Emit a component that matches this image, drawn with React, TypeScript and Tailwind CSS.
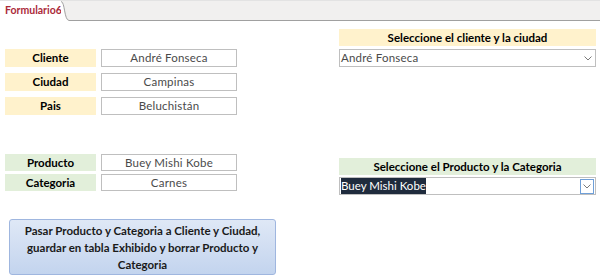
const font = { fontFamily: '"Lato", "Open Sans", sans-serif' };

function Label({ text, tone, h }: { text: string; tone: 'yellow' | 'green'; h: string }) {
  return (
    <div
      className={`w-[91px] ${h} flex items-center justify-center text-[11.5px] font-bold text-black ${
        tone === 'yellow' ? 'bg-[#fff2cc]' : 'bg-[#e2efda]'
      }`}
    >
      {text}
    </div>
  );
}

function Field({ value, h }: { value: string; h: string }) {
  return (
    <div className={`w-[136px] ${h} flex items-center justify-center border border-[#bfbfbf] bg-white text-[11.5px] tracking-[0.2px] text-[#4a4a4a]`}>
      {value}
    </div>
  );
}

function Chevron() {
  return (
    <svg width="8" height="5" viewBox="0 0 8 5" fill="none">
      <path d="M0.5 0.5 L4 4 L7.5 0.5" stroke="#7a7a7a" strokeWidth="1" />
    </svg>
  );
}

export default function App() {
  return (
    <div className="w-[600px] h-[276px] bg-white overflow-hidden" style={font}>
      {/* tab strip */}
      <div className="flex h-[21px] bg-[#f1f0ef] border-t border-[#e3e3e3]">
        <div className="w-[61px] h-[20px] bg-white flex items-center pl-[5px] text-[10.5px] font-bold text-[#ab2a3a]">
          Formulario6
        </div>
        <svg width="8" height="20" viewBox="0 0 8 20">
          <path d="M0 0 C4 0 3 19 8 19.5 L8 20 L0 20 Z" fill="white" />
          <path d="M0 0.5 C4 0.5 3 19 8 19.5" stroke="#a0a0a0" fill="none" />
        </svg>
        <div className="flex-1 border-b border-[#a0a0a0]" />
      </div>

      <div className="flex">
        {/* left column */}
        <div className="ml-[5px] w-[271px] flex flex-col">
          <div className="mt-[28px] flex flex-col gap-[6px]">
            <div className="flex gap-[5px]">
              <Label text="Cliente" tone="yellow" h="h-[18px]" />
              <Field value="André Fonseca" h="h-[18px]" />
            </div>
            <div className="flex gap-[5px]">
              <Label text="Ciudad" tone="yellow" h="h-[18px]" />
              <Field value="Campinas" h="h-[18px]" />
            </div>
            <div className="flex gap-[5px]">
              <Label text="Pais" tone="yellow" h="h-[18px]" />
              <Field value="Beluchistán" h="h-[18px]" />
            </div>
          </div>

          <div className="mt-[39px] flex flex-col gap-[3px]">
            <div className="flex gap-[5px]">
              <Label text="Producto" tone="green" h="h-[17px]" />
              <Field value="Buey Mishi Kobe" h="h-[17px]" />
            </div>
            <div className="flex gap-[5px]">
              <Label text="Categoria" tone="green" h="h-[17px]" />
              <Field value="Carnes" h="h-[17px]" />
            </div>
          </div>

          <button className="mt-[28px] ml-[4px] w-[267px] h-[56px] rounded-[3px] border border-[#9fb6df] bg-gradient-to-b from-[#dfe8f6] to-[#c3d4ee] text-[11.5px] font-bold leading-[17px] text-[#1a1a1a] px-[10px]">
            Pasar Producto y Categoria a Cliente y Ciudad, guardar en tabla Exhibido y borrar Producto y Categoria
          </button>
        </div>

        {/* right column */}
        <div className="ml-[63px] w-[257px] flex flex-col">
          <div className="mt-[8px] h-[17px] bg-[#fff2cc] flex items-center justify-center text-[11.5px] font-bold text-black">
            Seleccione el cliente y la ciudad
          </div>
          <div className="mt-[3px] h-[18px] border border-[#bfbfbf] bg-white flex items-center">
            <span className="flex-1 pl-[1px] text-[11.5px] tracking-[0.2px] text-[#4a4a4a]">André Fonseca</span>
            <span className="w-[14px] h-full flex items-center justify-center">
              <Chevron />
            </span>
          </div>

          <div className="mt-[91px] h-[17px] bg-[#e2efda] flex items-center justify-center text-[11.5px] font-bold text-black">
            Seleccione el Producto y la Categoria
          </div>
          <div className="mt-[2px] h-[18px] border border-[#bfbfbf] bg-white flex items-center">
            <span className="flex-1 pl-[1px] flex items-center">
              <span className="bg-[#1f2b3d] text-white text-[11.5px] leading-[16px]">Buey Mishi Kobe</span>
            </span>
            <span className="w-[14px] h-[15px] mr-[1px] border border-[#6f9fd8] bg-white flex items-center justify-center">
              <Chevron />
            </span>
          </div>
        </div>
      </div>
    </div>
  );
}
